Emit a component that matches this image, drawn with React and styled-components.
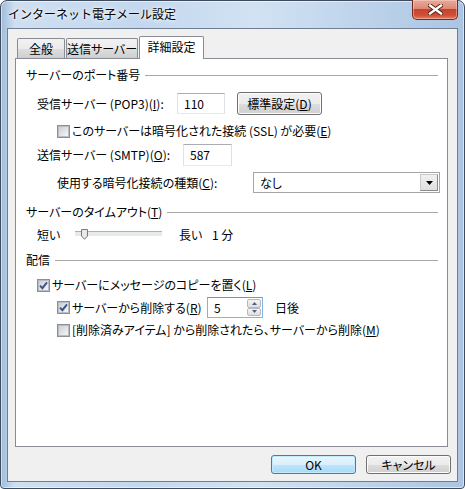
import React from "react";
import styled, { createGlobalStyle, css } from "styled-components";

const FONT = `"Noto Sans CJK JP", "Noto Sans", sans-serif`;

const GlobalStyle = createGlobalStyle`
  html, body {
    margin: 0;
    padding: 0;
    background: #ffffff;
  }
  body {
    font-family: ${FONT};
    font-size: 12px;
    color: #000;
  }
  * {
    box-sizing: border-box;
  }
`;

const Window = styled.div`
  width: 465px;
  height: 489px;
  display: flex;
  flex-direction: column;
  padding: 0 6px 6px;
  border: 1px solid #3e4c5e;
  border-radius: 7px 7px 4px 4px;
  background: linear-gradient(
    90deg,
    #9fbbdb 0%,
    #cfdff1 3%,
    #c3d7ee 30%,
    #d2e2f3 55%,
    #bcd2ea 80%,
    #aac4e2 100%
  );
  box-shadow: inset 0 0 0 1px rgba(255, 255, 255, 0.55);
`;

const TitleBar = styled.div`
  height: 27px;
  flex: none;
  display: flex;
  justify-content: space-between;
  align-items: flex-start;
`;

const Title = styled.div`
  padding: 5px 0 0 1px;
  font-size: 12px;
  line-height: 16px;
  color: #000;
  text-shadow: 0 0 6px rgba(255, 255, 255, 0.95), 0 0 3px rgba(255, 255, 255, 0.9);
`;

const CloseButton = styled.div`
  width: 46px;
  height: 20px;
  margin-top: -1px;
  display: flex;
  align-items: center;
  justify-content: center;
  border: 1px solid #6e2a1c;
  border-top: none;
  border-radius: 0 0 5px 5px;
  background: linear-gradient(
    180deg,
    #e9a99a 0%,
    #dc8a76 45%,
    #c7432c 50%,
    #cf4f36 80%,
    #e47e60 100%
  );
  box-shadow: inset 0 0 0 1px rgba(255, 220, 210, 0.45);
`;

const Client = styled.div`
  flex: 1;
  display: flex;
  flex-direction: column;
  padding: 7px 9px 0 7px;
  background: #f0f0f0;
  border: 1px solid #6f7e91;
`;

const TabStrip = styled.div`
  position: relative;
  z-index: 1;
  height: 22px;
  flex: none;
  display: flex;
  align-items: flex-end;
  gap: 1px;
  padding-left: 2px;
`;

const Tab = styled.div`
  width: ${(p) => p.$w}px;
  height: 20px;
  display: flex;
  align-items: center;
  justify-content: center;
  white-space: nowrap;
  border: 1px solid #898c95;
  border-bottom: none;
  border-radius: 2px 2px 0 0;
  font-size: 12px;
  line-height: 14px;
  font-feature-settings: "palt";
  background: linear-gradient(
    180deg,
    #f2f2f2 0%,
    #ebebeb 50%,
    #dddddd 51%,
    #cfcfcf 100%
  );
  ${(p) =>
    p.$active &&
    css`
      height: 23px;
      margin-bottom: -1px;
      padding-bottom: 2px;
      background: #ffffff;
    `}
`;

const Panel = styled.div`
  height: 389px;
  flex: none;
  display: flex;
  flex-direction: column;
  padding: 9px 9px 0 10px;
  background: #ffffff;
  border: 1px solid #898c95;
  font-feature-settings: "palt";
`;

const SectionHeader = styled.div`
  height: 14px;
  margin-top: ${(p) => p.$mt || 0}px;
  display: flex;
  align-items: center;
  gap: 5px;
  line-height: 14px;
  white-space: nowrap;

  &::after {
    content: "";
    flex: 1;
    height: 0;
    margin-top: 1px;
    border-top: 1px solid #a7a7a7;
  }
`;

const Row = styled.div`
  height: ${(p) => p.$h || 14}px;
  margin-top: ${(p) => p.$mt || 0}px;
  padding-left: ${(p) => p.$pl || 0}px;
  display: flex;
  align-items: center;
  line-height: 14px;
  white-space: nowrap;
`;

const Label = styled.span`
  flex: none;
  width: ${(p) => (p.$w ? `${p.$w}px` : "auto")};
  margin-left: ${(p) => p.$ml || 0}px;
`;

const TextBox = styled.div`
  width: ${(p) => p.$w}px;
  height: ${(p) => p.$h}px;
  flex: none;
  display: flex;
  align-items: center;
  padding-left: 6px;
  background: #ffffff;
  border: 1px solid;
  border-color: #abadb3 #dbdfe6 #e3e9ef #e2e3ea;
`;

const PushButton = styled.div`
  width: ${(p) => p.$w}px;
  height: ${(p) => p.$h}px;
  margin-left: ${(p) => p.$ml || 0}px;
  flex: none;
  display: flex;
  align-items: center;
  justify-content: center;
  white-space: nowrap;
  border: 1px solid #707070;
  border-radius: 3px;
  line-height: 14px;
  font-feature-settings: "palt";
  background: linear-gradient(
    180deg,
    #f2f2f2 0%,
    #ebebeb 50%,
    #dddddd 51%,
    #cfcfcf 100%
  );
  box-shadow: inset 0 0 0 1px #fcfcfc;
  ${(p) =>
    p.$default &&
    css`
      border-color: #3c7fb1;
      background: linear-gradient(
        180deg,
        #eaf6fd 0%,
        #d9f0fc 50%,
        #bee6fd 51%,
        #a7d9f5 100%
      );
      box-shadow: inset 0 0 0 1px #c4e8fc;
    `}
`;

const Box = styled.span`
  position: relative;
  width: 13px;
  height: 13px;
  flex: none;
  margin-right: 2px;
  display: flex;
  align-items: center;
  justify-content: center;
  border: 1px solid #8e8f8f;
  background: #f4f4f4;

  &::before {
    content: "";
    width: 9px;
    height: 9px;
    border: 1px solid #b9bcc2;
    background: linear-gradient(135deg, #cbcfd5 0%, #f6f6f6 100%);
  }

  svg {
    position: absolute;
    left: 0;
    top: 0;
  }
`;

const CheckBox = ({ checked }) => (
  <Box>
    {checked && (
      <svg width="11" height="11" viewBox="0 0 11 11">
        <path
          d="M2 5.6 L4.4 8.2 L9 2.4"
          fill="none"
          stroke="#3b5289"
          strokeWidth="1.9"
          strokeLinejoin="miter"
        />
      </svg>
    )}
  </Box>
);

const SelectBox = styled.div`
  width: 187px;
  height: 21px;
  flex: none;
  display: flex;
  align-items: center;
  justify-content: space-between;
  padding: 1px 1px 1px 6px;
  background: #ffffff;
  border: 1px solid #a5a5a5;
`;

const DropButton = styled.div`
  width: 18px;
  height: 17px;
  display: flex;
  align-items: center;
  justify-content: center;
  background: linear-gradient(180deg, #f0f0f0, #e0e0e0);
  border: 1px solid #8a8a8a;
  border-top-color: #c9c9c9;
  border-left-color: #c9c9c9;
`;

const Track = styled.div`
  position: relative;
  width: 87px;
  height: 14px;
  flex: none;

  &::before {
    content: "";
    position: absolute;
    left: 0;
    right: 0;
    top: 3px;
    height: 3px;
    border-top: 1px solid #b0b0b0;
    border-bottom: 1px solid #e7eaea;
    background: #e7eaea;
  }

  svg {
    position: absolute;
    left: 6px;
    top: 1px;
  }
`;

const Spinner = styled.div`
  width: 56px;
  height: 21px;
  flex: none;
  display: flex;
  align-items: center;
  justify-content: space-between;
  padding: 1px 1px 1px 6px;
  background: #ffffff;
  border: 1px solid #7eb4ea;
  border-top-color: #569de5;
`;

const SpinButtons = styled.div`
  width: 14px;
  height: 17px;
  display: flex;
  flex-direction: column;
`;

const SpinButton = styled.div`
  flex: 1;
  display: flex;
  align-items: center;
  justify-content: center;
  border: 1px solid #b8b8b8;
  border-radius: 2px;
  background: linear-gradient(180deg, #f5f5f5, #dedede);
`;

const Footer = styled.div`
  margin-top: 8px;
  margin-right: -3px;
  display: flex;
  justify-content: flex-end;
  gap: 10px;
`;

const CloseGlyph = () => (
  <svg width="15" height="11" viewBox="0 0 15 11">
    <path
      d="M2 1.5 L13 9.5 M13 1.5 L2 9.5"
      stroke="#5b1d12"
      strokeWidth="4.2"
      strokeLinecap="square"
    />
    <path
      d="M2 1.5 L13 9.5 M13 1.5 L2 9.5"
      stroke="#ffffff"
      strokeWidth="2.4"
      strokeLinecap="square"
    />
  </svg>
);

export default function App() {
  return (
    <>
      <GlobalStyle />
      <Window>
        <TitleBar>
          <Title>インターネット電子メール設定</Title>
          <CloseButton>
            <CloseGlyph />
          </CloseButton>
        </TitleBar>

        <Client>
          <TabStrip>
            <Tab $w={48}>全般</Tab>
            <Tab $w={72}>送信サーバー</Tab>
            <Tab $w={65} $active>
              詳細設定
            </Tab>
          </TabStrip>

          <Panel>
            <SectionHeader>
              <span>サーバーのポート番号</span>
            </SectionHeader>

            <Row $mt={10} $h={23} $pl={11}>
              <Label $w={140}>
                受信サーバー (POP3)(<u>I</u>):
              </Label>
              <TextBox $w={48} $h={21}>
                110
              </TextBox>
              <PushButton $w={85} $h={23} $ml={12}>
                標準設定(<u>D</u>)
              </PushButton>
            </Row>

            <Row $mt={9} $pl={31}>
              <CheckBox />
              <Label>
                このサーバーは暗号化された接続 (SSL) が必要(<u>E</u>)
              </Label>
            </Row>

            <Row $mt={6} $h={22} $pl={11}>
              <Label $w={146}>
                送信サーバー (SMTP)(<u>O</u>):
              </Label>
              <TextBox $w={49} $h={22}>
                587
              </TextBox>
            </Row>

            <Row $mt={6} $h={21} $pl={31}>
              <Label $w={196}>
                使用する暗号化接続の種類(<u>C</u>):
              </Label>
              <SelectBox>
                なし
                <DropButton>
                  <svg width="7" height="4" viewBox="0 0 7 4">
                    <path d="M0 0 H7 L3.5 4 Z" fill="#000" />
                  </svg>
                </DropButton>
              </SelectBox>
            </Row>

            <SectionHeader $mt={12}>
              <span>
                サーバーのタイムアウト(<u>T</u>)
              </span>
            </SectionHeader>

            <Row $mt={9} $pl={11}>
              <Label $w={38}>短い</Label>
              <Track>
                <svg width="7" height="11" viewBox="0 0 7 11">
                  <path
                    d="M0.5 0.5 H6.5 V7 L3.5 10.3 L0.5 7 Z"
                    fill="#e9e9e9"
                    stroke="#7a7a7a"
                    strokeWidth="1"
                  />
                </svg>
              </Track>
              <Label $w={33} $ml={17}>
                長い
              </Label>
              <Label>1 分</Label>
            </Row>

            <SectionHeader $mt={11}>
              <span>配信</span>
            </SectionHeader>

            <Row $mt={11} $pl={11}>
              <CheckBox checked />
              <Label>
                サーバーにメッセージのコピーを置く(<u>L</u>)
              </Label>
            </Row>

            <Row $mt={5} $h={21} $pl={31}>
              <CheckBox checked />
              <Label $w={135}>
                サーバーから削除する(<u>R</u>)
              </Label>
              <Spinner>
                5
                <SpinButtons>
                  <SpinButton>
                    <svg width="5" height="3" viewBox="0 0 5 3">
                      <path d="M0 3 L2.5 0 L5 3 Z" fill="#4d6185" />
                    </svg>
                  </SpinButton>
                  <SpinButton>
                    <svg width="5" height="3" viewBox="0 0 5 3">
                      <path d="M0 0 H5 L2.5 3 Z" fill="#4d6185" />
                    </svg>
                  </SpinButton>
                </SpinButtons>
              </Spinner>
              <Label $ml={12}>日後</Label>
            </Row>

            <Row $mt={5} $pl={31}>
              <CheckBox />
              <Label>
                [削除済みアイテム] から削除されたら、サーバーから削除(<u>M</u>)
              </Label>
            </Row>
          </Panel>

          <Footer>
            <PushButton $w={85} $h={19} $default>
              OK
            </PushButton>
            <PushButton $w={85} $h={19}>
              キャンセル
            </PushButton>
          </Footer>
        </Client>
      </Window>
    </>
  );
}
